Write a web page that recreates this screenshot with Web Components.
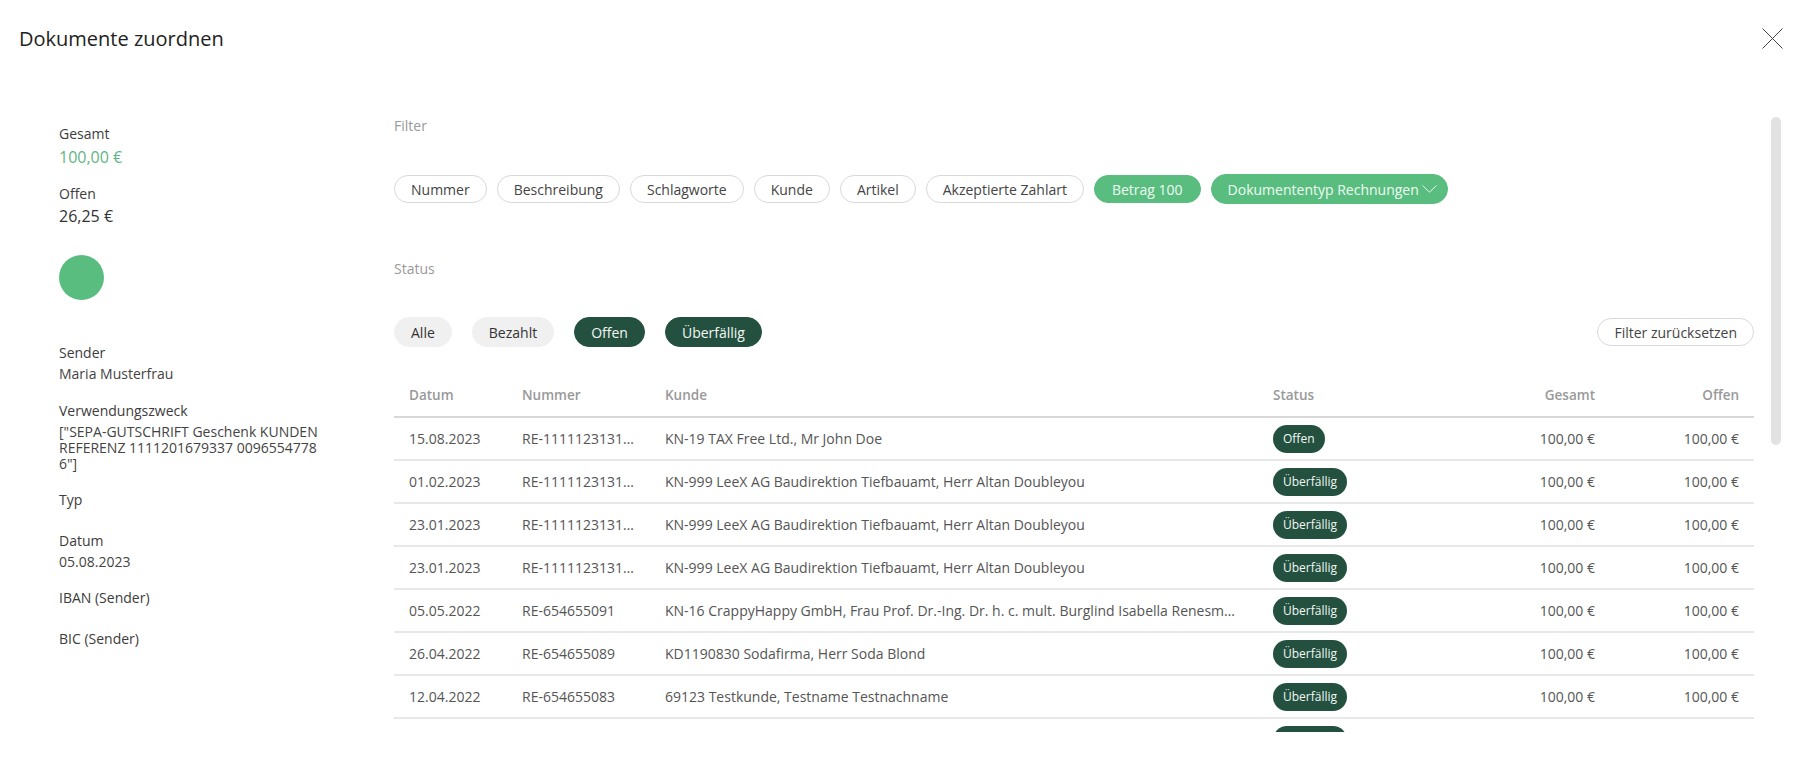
<!DOCTYPE html>
<html lang="de">
<head>
<meta charset="utf-8">
<title>Dokumente zuordnen</title>
<style>
  html, body { margin: 0; height: 100%; background: #fff; }
  body { font-family: "Open Sans", "Liberation Sans", sans-serif; color: #333; overflow: hidden; }
</style>
</head>
<body>

<assign-dialog>
  <span slot="title">Dokumente zuordnen</span>

  <summary-panel slot="side">
    <info-field gap="16" lead="2" large color="#62b584"><span slot="label">Gesamt</span>100,00 €</info-field>
    <info-field gap="28" lead="1" large color="#333"><span slot="label">Offen</span>26,25 €</info-field>
    <progress-dot></progress-dot>
    <info-field gap="17"><span slot="label">Sender</span>Maria Musterfrau</info-field>
    <info-field gap="18" lead="3" tight><span slot="label">Verwendungszweck</span>["SEPA-GUTSCHRIFT Geschenk KUNDEN REFERENZ 1111201679337 00965547786"]</info-field>
    <info-field gap="21"><span slot="label">Typ</span></info-field>
    <info-field gap="16"><span slot="label">Datum</span>05.08.2023</info-field>
    <info-field gap="21"><span slot="label">IBAN (Sender)</span></info-field>
    <info-field gap="0"><span slot="label">BIC (Sender)</span></info-field>
  </summary-panel>

  <div slot="main">
    <filter-group label="Filter" gap="10" after="55">
      <filter-pill>Nummer</filter-pill>
      <filter-pill>Beschreibung</filter-pill>
      <filter-pill>Schlagworte</filter-pill>
      <filter-pill>Kunde</filter-pill>
      <filter-pill>Artikel</filter-pill>
      <filter-pill>Akzeptierte Zahlart</filter-pill>
      <filter-pill kind="active" style="padding:0 17px">Betrag 100</filter-pill>
      <filter-pill kind="active" dropdown>Dokumententyp Rechnungen</filter-pill>
    </filter-group>

    <filter-group label="Status" gap="20" after="27">
      <filter-pill kind="soft">Alle</filter-pill>
      <filter-pill kind="soft">Bezahlt</filter-pill>
      <filter-pill kind="dark">Offen</filter-pill>
      <filter-pill kind="dark">Überfällig</filter-pill>
      <filter-pill slot="end">Filter zurücksetzen</filter-pill>
    </filter-group>

    <doc-table>
      <doc-row date="15.08.2023" number="RE-1111123131…" total="100,00 €" open="100,00 €" status="Offen">KN-19 TAX Free Ltd., Mr John Doe</doc-row>
      <doc-row date="01.02.2023" number="RE-1111123131…" total="100,00 €" open="100,00 €" status="Überfällig">KN-999 LeeX AG Baudirektion Tiefbauamt, Herr Altan Doubleyou</doc-row>
      <doc-row date="23.01.2023" number="RE-1111123131…" total="100,00 €" open="100,00 €" status="Überfällig">KN-999 LeeX AG Baudirektion Tiefbauamt, Herr Altan Doubleyou</doc-row>
      <doc-row date="23.01.2023" number="RE-1111123131…" total="100,00 €" open="100,00 €" status="Überfällig">KN-999 LeeX AG Baudirektion Tiefbauamt, Herr Altan Doubleyou</doc-row>
      <doc-row date="05.05.2022" number="RE-654655091" total="100,00 €" open="100,00 €" status="Überfällig">KN-16 CrappyHappy GmbH, Frau Prof. Dr.-Ing. Dr. h. c. mult. Burglind Isabella Renesm…</doc-row>
      <doc-row date="26.04.2022" number="RE-654655089" total="100,00 €" open="100,00 €" status="Überfällig">KD1190830 Sodafirma, Herr Soda Blond</doc-row>
      <doc-row date="12.04.2022" number="RE-654655083" total="100,00 €" open="100,00 €" status="Überfällig">69123 Testkunde, Testname Testnachname</doc-row>
      <doc-row status="Überfällig"></doc-row>
    </doc-table>
  </div>
</assign-dialog>

<script>
class AssignDialog extends HTMLElement{
    constructor(){
        super();
        this.attachShadow({mode:'open'});
        this.shadowRoot.innerHTML = `
        <style>
        :host{ display:block; height:100vh; overflow:hidden; background:#fff; }
        .head{
            height:84px;
            box-sizing:border-box;
            padding:25px 21px 0 19px;
            display:flex;
            justify-content:space-between;
            align-items:flex-start;
        }
        .title{ font-size:20px; line-height:28px; font-weight:500; color:#222; }
        .close{ display:block; margin-top:3px; }
        .body{ display:flex; height:648px; }
        .side{ flex:0 0 394px; box-sizing:border-box; padding:40px 0 0 59px; }
        .main{ flex:0 0 1360px; height:100%; overflow:hidden; padding-top:32px; box-sizing:border-box; }
        .thumb{
            position:absolute;
            left:1771px; top:117px;
            width:10px; height:328px;
            border-radius:5px;
            background:#e2e2e2;
        }
        </style>
        <div class="head">
            <div class="title"><slot name="title"></slot></div>
            <svg class="close" width="21" height="21" viewBox="0 0 21 21" fill="none" stroke="#444" stroke-width="1">
                <path d="M0.5 0.5L20.5 20.5M20.5 0.5L0.5 20.5"/>
            </svg>
        </div>
        <div class="body">
            <div class="side"><slot name="side"></slot></div>
            <div class="main"><slot name="main"></slot></div>
        </div>
        <div class="thumb"></div>
        `;
    }
}

class SummaryPanel extends HTMLElement{
    constructor(){
        super();
        this.attachShadow({mode:'open'});
        this.shadowRoot.innerHTML = `
        <style>
        :host{ display:block; width:262px; font-size:14px; color:#444; }
        </style>
        <slot></slot>
        `;
    }
}

class InfoField extends HTMLElement{
    constructor(){
        super();
        this.attachShadow({mode:'open'});
        const gap = this.getAttribute('gap') || '17';
        const lead = this.getAttribute('lead') || '1';
        const tight = this.hasAttribute('tight');
        const large = this.hasAttribute('large');
        const color = this.getAttribute('color') || '#444';
        this.shadowRoot.innerHTML = `
        <style>
        :host{ display:block; margin-bottom:${gap}px; }
        .label{ line-height:20px; color:#3c3c3c; margin-bottom:${lead}px; }
        .value{
            line-height:${tight ? 16 : large ? 22 : 20}px;
            font-size:${large ? 16 : 14}px;
            word-break:${tight ? 'break-all' : 'normal'};
            color:${color};
        }
        </style>
        <div class="label"><slot name="label"></slot></div>
        <div class="value"><slot></slot></div>
        `;
    }
}

class ProgressDot extends HTMLElement{
    constructor(){
        super();
        this.attachShadow({mode:'open'});
        this.shadowRoot.innerHTML = `
        <style>
        :host{
            display:block;
            width:45px; height:45px;
            border-radius:50%;
            background:#5abd80;
            margin-bottom:43px;
        }
        </style>
        `;
    }
}

// Label above a row of pills, the "end" slot sits on the far right
class FilterGroup extends HTMLElement{
    constructor(){
        super();
        this.attachShadow({mode:'open'});
        const gap = this.getAttribute('gap') || '10';
        const after = this.getAttribute('after') || '27';
        this.shadowRoot.innerHTML = `
        <style>
        :host{ display:block; margin-bottom:${after}px; }
        .label{ font-size:14px; line-height:20px; color:#999; margin-bottom:38px; height:20px; }
        .row{ display:flex; align-items:center; justify-content:space-between; height:30px; }
        .pills{ display:flex; align-items:center; gap:${gap}px; }
        </style>
        <div class="label">${this.getAttribute('label')}</div>
        <div class="row">
            <div class="pills"><slot></slot></div>
            <slot name="end"></slot>
        </div>
        `;
    }
}

class FilterPill extends HTMLElement{
    constructor(){
        super();
        this.attachShadow({mode:'open'});
        const dropdown = this.hasAttribute('dropdown');
        this.shadowRoot.innerHTML = `
        <style>
        :host{
            display:inline-flex;
            align-items:center;
            box-sizing:border-box;
            height:28px;
            padding:0 16px;
            border:1px solid #d9d9d9;
            border-radius:14px;
            font-size:14px;
            color:#444;
            white-space:nowrap;
            background:#fff;
        }
        :host([kind="active"]){ background:#5abd80; border-color:#5abd80; color:#eefbf2; }
        :host([kind="active"][dropdown]){ height:30px; border-radius:15px; padding-right:10px; }
        :host([kind="soft"]){ height:30px; border-radius:15px; background:#f0f0f0; border-color:#f0f0f0; color:#333; }
        :host([kind="dark"]){ height:30px; border-radius:15px; background:#24513f; border-color:#24513f; color:#f2f7f4; }
        svg{ display:block; margin-left:3px; }
        </style>
        <slot></slot>
        ${dropdown ? `<svg width="15" height="8" viewBox="0 0 15 8" fill="none" stroke="#e6f7ec" stroke-width="1"><path d="M0.5 0.5L7.5 7.2L14.5 0.5"/></svg>` : ''}
        `;
    }
}

const ROW_COLUMNS = '113px 143px 608px 1fr 144px 144px';

class DocTable extends HTMLElement{
    constructor(){
        super();
        this.attachShadow({mode:'open'});
        this.shadowRoot.innerHTML = `
        <style>
        :host{ display:block; font-size:14px; }
        .head{
            display:grid;
            grid-template-columns:${ROW_COLUMNS};
            height:44px;
            box-sizing:border-box;
            align-items:center;
            border-bottom:2px solid #d8d8d8;
            font-size:13.5px;
            font-weight:600;
            color:#999;
        }
        .head div{ padding:0 15px; }
        .right{ text-align:right; }
        </style>
        <div class="head">
            <div>Datum</div><div>Nummer</div><div>Kunde</div><div>Status</div>
            <div class="right">Gesamt</div><div class="right">Offen</div>
        </div>
        <slot></slot>
        `;
    }
}

class DocRow extends HTMLElement{
    constructor(){
        super();
        this.attachShadow({mode:'open'});
        const a = n => this.getAttribute(n) || '';
        this.shadowRoot.innerHTML = `
        <style>
        :host{
            display:grid;
            grid-template-columns:${ROW_COLUMNS};
            height:43px;
            box-sizing:border-box;
            align-items:center;
            border-bottom:2px solid #e8e8e8;
            color:#555;
        }
        .cell{ padding:0 15px; white-space:nowrap; overflow:hidden; text-overflow:ellipsis; min-width:0; }
        .right{ text-align:right; }
        </style>
        <div class="cell">${a('date')}</div>
        <div class="cell">${a('number')}</div>
        <div class="cell"><slot></slot></div>
        <div class="cell"><status-badge>${a('status')}</status-badge></div>
        <div class="cell right">${a('total')}</div>
        <div class="cell right">${a('open')}</div>
        `;
    }
}

class StatusBadge extends HTMLElement{
    constructor(){
        super();
        this.attachShadow({mode:'open'});
        this.shadowRoot.innerHTML = `
        <style>
        :host{
            display:inline-block;
            height:28px;
            line-height:28px;
            padding:0 10px;
            border-radius:14px;
            background:#24513f;
            color:#f2f7f4;
            font-size:12px;
            vertical-align:top;
        }
        </style>
        <slot></slot>
        `;
    }
}

customElements.define("status-badge", StatusBadge);
customElements.define("doc-row", DocRow);
customElements.define("doc-table", DocTable);
customElements.define("filter-pill", FilterPill);
customElements.define("filter-group", FilterGroup);
customElements.define("progress-dot", ProgressDot);
customElements.define("info-field", InfoField);
customElements.define("summary-panel", SummaryPanel);
customElements.define("assign-dialog", AssignDialog);
</script>
</body>
</html>
